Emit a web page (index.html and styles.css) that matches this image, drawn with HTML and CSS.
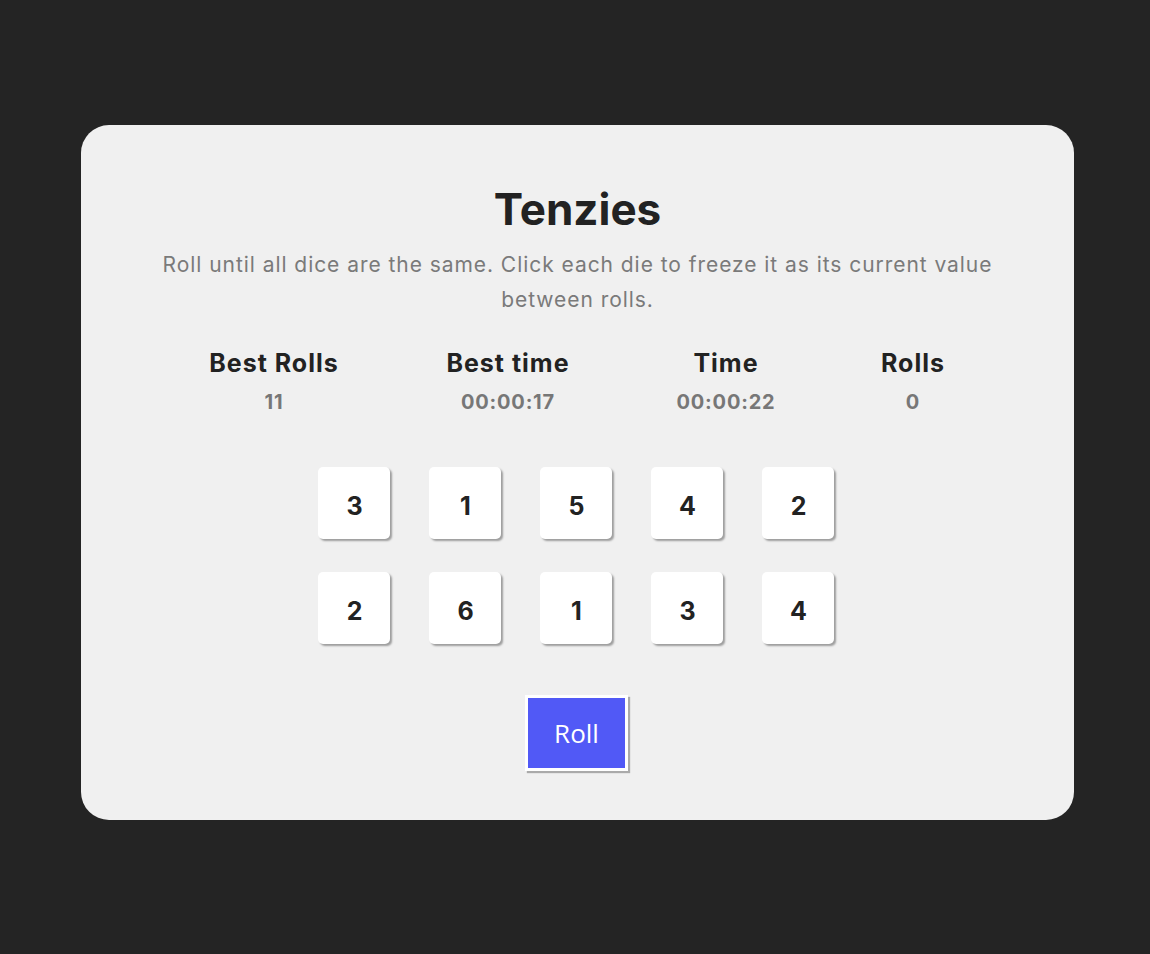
FILE: index.html
```html
<!DOCTYPE html>
<html lang="en">
<head>
<meta charset="utf-8">
<title>Tenzies</title>
<link rel="stylesheet" href="styles.css">
</head>
<body>
<main class="page">
  <section class="card">
    <h1 class="title">Tenzies</h1>
    <p class="instructions">Roll until all dice are the same. Click each die to freeze it as its current value between rolls.</p>
    <div class="stats">
      <div class="stat"><div class="stat-label">Best Rolls</div><div class="stat-value">11</div></div>
      <div class="stat"><div class="stat-label">Best time</div><div class="stat-value">00:00:17</div></div>
      <div class="stat"><div class="stat-label">Time</div><div class="stat-value">00:00:22</div></div>
      <div class="stat"><div class="stat-label">Rolls</div><div class="stat-value">0</div></div>
    </div>
    <div class="dice">
      <div class="die">3</div>
      <div class="die">1</div>
      <div class="die">5</div>
      <div class="die">4</div>
      <div class="die">2</div>
      <div class="die">2</div>
      <div class="die">6</div>
      <div class="die">1</div>
      <div class="die">3</div>
      <div class="die">4</div>
    </div>
    <button class="roll">Roll</button>
  </section>
</main>
</body>
</html>
```
FILE: styles.css
```css
html, body {
  margin: 0;
  padding: 0;
}
body {
  background: #242424;
  font-family: "Inter", "Liberation Sans", sans-serif;
}
.page {
  padding: 125px 76px 0 81px;
}
.card {
  box-sizing: border-box;
  height: 695px;
  background: #f0f0f0;
  border-radius: 28px;
  display: flex;
  flex-direction: column;
  align-items: center;
  padding-top: 56px;
}
.title {
  margin: 0;
  font-size: 44px;
  line-height: 56px;
  font-weight: 700;
  color: #222222;
}
.instructions {
  margin: 10px 0 0;
  width: 870px;
  text-align: center;
  font-size: 21px;
  letter-spacing: 0.95px;
  line-height: 35px;
  color: #7a7a7a;
}
.stats {
  margin-top: 29px;
  display: grid;
  grid-template-columns: 250px 218px 218px 156px;
  padding-right: 15px;
}
.stat {
  text-align: center;
}
.stat-label {
  font-size: 25px;
  letter-spacing: 1px;
  line-height: 34px;
  font-weight: 700;
  color: #222222;
}
.stat-value {
  margin-top: 8px;
  font-size: 20px;
  letter-spacing: 0.8px;
  line-height: 28px;
  font-weight: 700;
  color: #777777;
}
.dice {
  margin-top: 51px;
  display: grid;
  grid-template-columns: repeat(5, 72px);
  column-gap: 39px;
  row-gap: 33px;
  padding-right: 4px;
}
.die {
  box-sizing: border-box;
  width: 72px;
  height: 72px;
  padding: 5px 0 0 2px;
  background: #ffffff;
  border-radius: 5px;
  box-shadow: 2px 2px 2px rgba(0, 0, 0, 0.35);
  display: flex;
  align-items: center;
  justify-content: center;
  font-size: 25px;
  font-weight: 700;
  color: #222222;
}
.roll {
  margin-top: 51px;
  margin-right: 2px;
  width: 103px;
  height: 76px;
  background: #5159f6;
  border: 3px solid #ffffff;
  box-shadow: 2px 2px 1px #aaaaaa;
  color: #ffffff;
  font-family: "Open Sans", sans-serif;
  font-size: 26px;
  padding: 0;
}
```
